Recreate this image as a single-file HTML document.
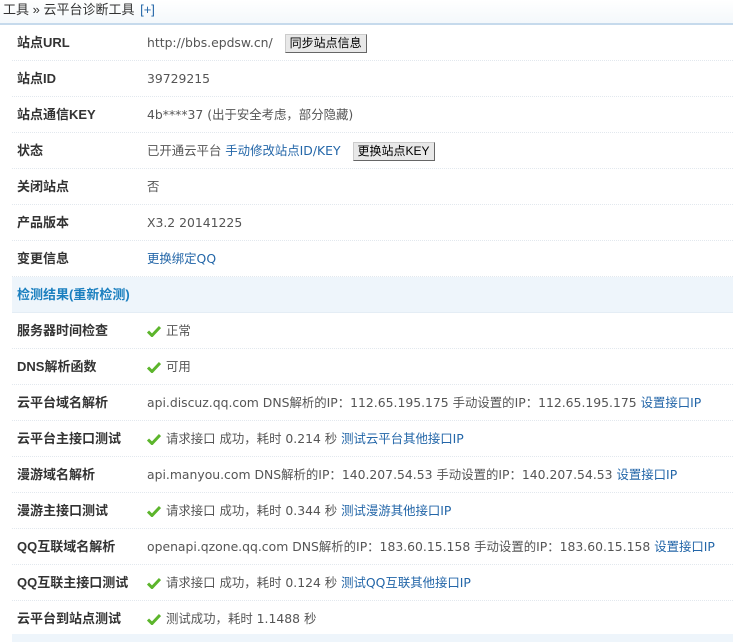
<!DOCTYPE html>
<html><head><meta charset="utf-8"><style>
body{margin:0;width:733px;height:642px;overflow:hidden;background:#fff;font-family:"DejaVu Sans","Noto Sans CJK SC",sans-serif;font-size:12.4px;color:#555}
.top{height:23px;line-height:20px;padding-left:3px;font-size:13px;color:#333;border-bottom:2px solid #c6daec;background:linear-gradient(#fff,#f4f8fb);font-family:"Liberation Sans","Noto Sans CJK SC",sans-serif}
.top a{color:#2366a8;margin-left:2px}
.row{height:35px;line-height:35px;border-bottom:1px dotted #e2e8ee;margin-left:12px;position:relative}
.l{position:absolute;left:5px;font-weight:bold;color:#333;font-size:13px;font-family:"Liberation Sans","Noto Sans CJK SC",sans-serif}
.v{position:absolute;left:135px;white-space:nowrap}
a{color:#2366a8;text-decoration:none}
.sec{height:35px;line-height:35px;background:#eef5fb;margin-left:12px;border-bottom:1px solid #e4edf5;color:#1a7fbf;font-weight:bold;font-size:13px;padding-left:5px;font-family:"Liberation Sans","Noto Sans CJK SC",sans-serif}
.btn{display:inline-block;height:17px;line-height:17px;padding:0 4px;border:1px solid #888;border-color:#ccc #666 #666 #ccc;background:#e8e8e8;color:#000;font-size:12px;margin-left:8px;vertical-align:middle;font-family:"Liberation Sans","Noto Sans CJK SC",sans-serif}
.ck{display:inline-block;width:14px;height:12px;vertical-align:middle;margin-right:5px;margin-top:-2px}
.bot{position:absolute;left:12px;right:0;top:634px;height:8px;background:#eef5fb}
</style></head><body>
<div class="top">工具 » 云平台诊断工具 <a>[+]</a></div>
<div class="row"><span class="l">站点URL</span><span class="v">http://bbs.epdsw.cn/ <span class="btn">同步站点信息</span></span></div>
<div class="row"><span class="l">站点ID</span><span class="v">39729215</span></div>
<div class="row"><span class="l">站点通信KEY</span><span class="v">4b****37 (出于安全考虑，部分隐藏)</span></div>
<div class="row"><span class="l">状态</span><span class="v">已开通云平台 <a>手动修改站点ID/KEY</a> <span class="btn">更换站点KEY</span></span></div>
<div class="row"><span class="l">关闭站点</span><span class="v">否</span></div>
<div class="row"><span class="l">产品版本</span><span class="v">X3.2 20141225</span></div>
<div class="row"><span class="l">变更信息</span><span class="v"><a>更换绑定QQ</a></span></div>
<div class="sec">检测结果(重新检测)</div>
<div class="row"><span class="l">服务器时间检查</span><span class="v"><svg class="ck" viewBox="0 0 14 12"><path d="M1 6.5L5 10.5L13 2" stroke="#5cb52c" stroke-width="3" fill="none"/></svg>正常</span></div>
<div class="row"><span class="l">DNS解析函数</span><span class="v"><svg class="ck" viewBox="0 0 14 12"><path d="M1 6.5L5 10.5L13 2" stroke="#5cb52c" stroke-width="3" fill="none"/></svg>可用</span></div>
<div class="row"><span class="l">云平台域名解析</span><span class="v">api.discuz.qq.com DNS解析的IP：112.65.195.175 手动设置的IP：112.65.195.175 <a>设置接口IP</a></span></div>
<div class="row"><span class="l">云平台主接口测试</span><span class="v"><svg class="ck" viewBox="0 0 14 12"><path d="M1 6.5L5 10.5L13 2" stroke="#5cb52c" stroke-width="3" fill="none"/></svg>请求接口 成功，耗时 0.214 秒 <a>测试云平台其他接口IP</a></span></div>
<div class="row"><span class="l">漫游域名解析</span><span class="v">api.manyou.com DNS解析的IP：140.207.54.53 手动设置的IP：140.207.54.53 <a>设置接口IP</a></span></div>
<div class="row"><span class="l">漫游主接口测试</span><span class="v"><svg class="ck" viewBox="0 0 14 12"><path d="M1 6.5L5 10.5L13 2" stroke="#5cb52c" stroke-width="3" fill="none"/></svg>请求接口 成功，耗时 0.344 秒 <a>测试漫游其他接口IP</a></span></div>
<div class="row"><span class="l">QQ互联域名解析</span><span class="v">openapi.qzone.qq.com DNS解析的IP：183.60.15.158 手动设置的IP：183.60.15.158 <a>设置接口IP</a></span></div>
<div class="row"><span class="l">QQ互联主接口测试</span><span class="v"><svg class="ck" viewBox="0 0 14 12"><path d="M1 6.5L5 10.5L13 2" stroke="#5cb52c" stroke-width="3" fill="none"/></svg>请求接口 成功，耗时 0.124 秒 <a>测试QQ互联其他接口IP</a></span></div>
<div class="row" style="border:none"><span class="l">云平台到站点测试</span><span class="v"><svg class="ck" viewBox="0 0 14 12"><path d="M1 6.5L5 10.5L13 2" stroke="#5cb52c" stroke-width="3" fill="none"/></svg>测试成功，耗时 1.1488 秒</span></div>
<div class="bot"></div>
</body></html>
